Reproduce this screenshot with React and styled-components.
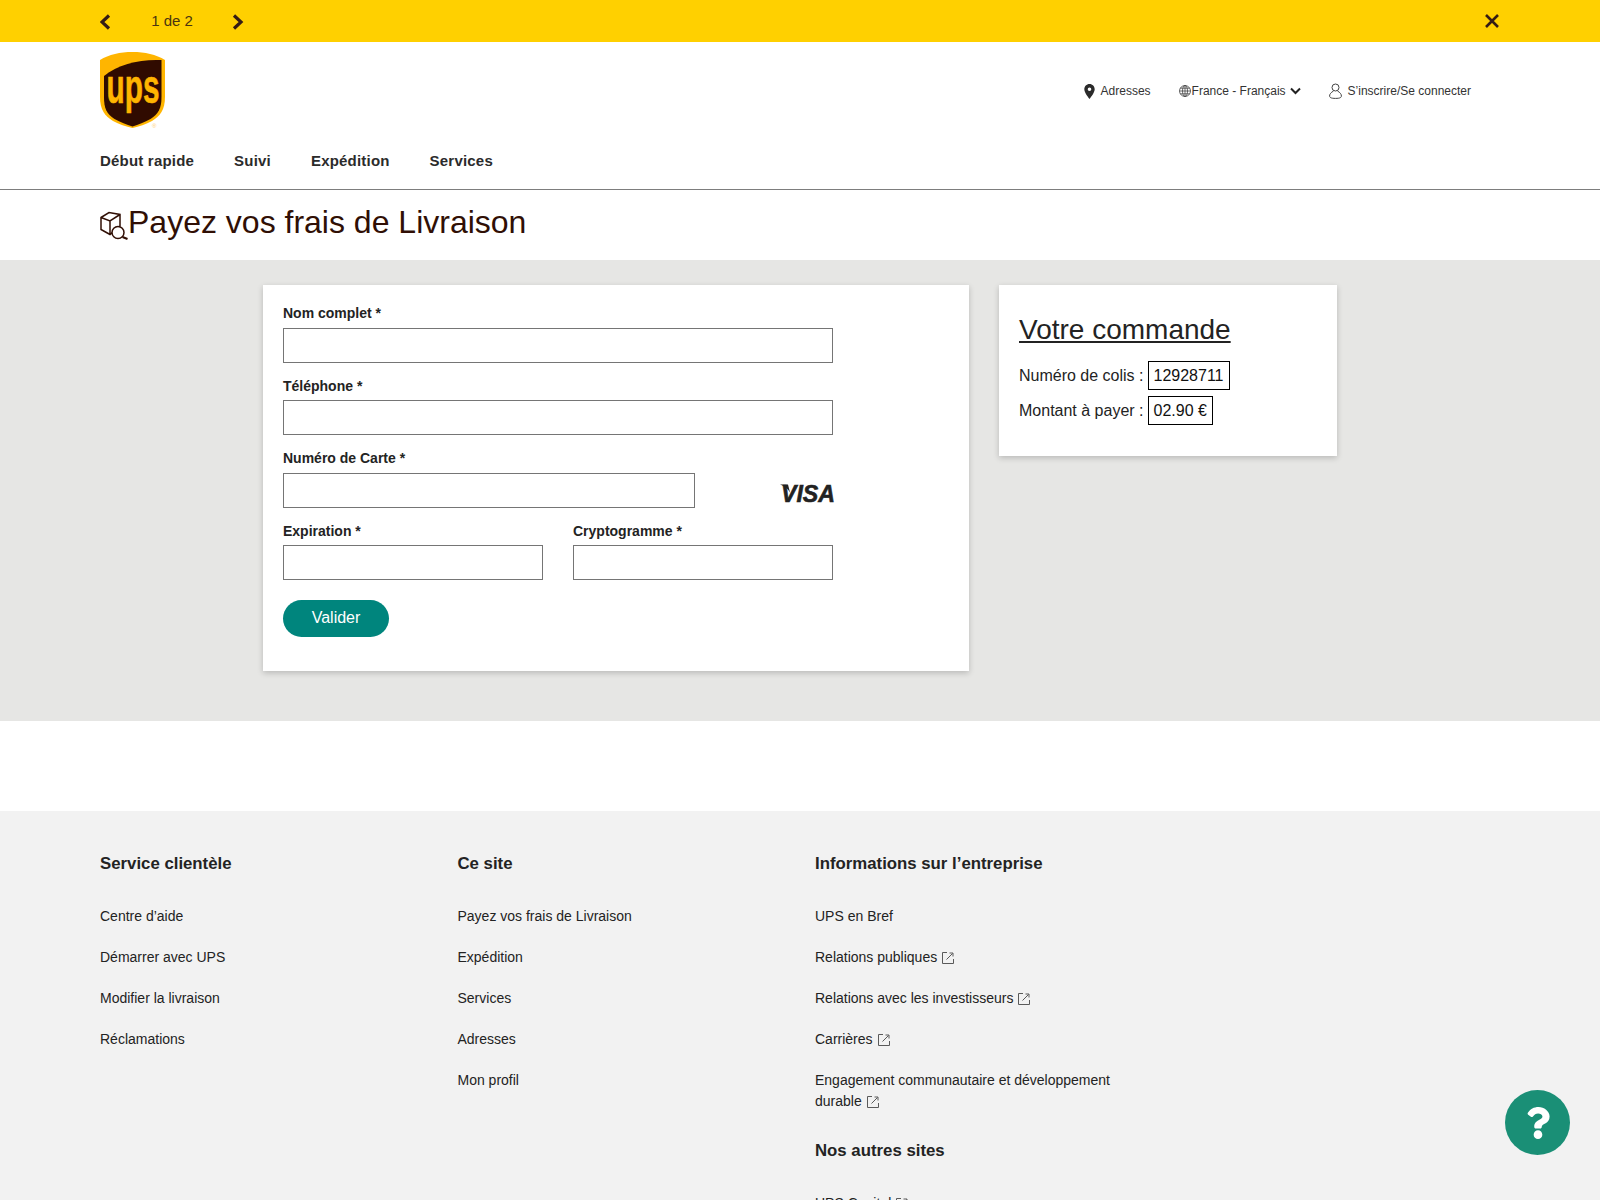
import styled, { createGlobalStyle } from "styled-components";
import { FaQuestion } from "react-icons/fa";

const GlobalStyle = createGlobalStyle`
	html, body {
		margin: 0;
		padding: 0;
		background: #fff;
		font-family: "Liberation Sans", Arial, sans-serif;
		color: #232323;
	}
	* { box-sizing: border-box; }
`

const TopBar = styled.div`
	height: 42px;
	background: #ffd000;
	display: flex;
	align-items: center;
	padding: 0 100px;
	color: #351c15;
`
const Pager = styled.span`
	font-size: 15px;
	width: 120px;
	text-align: center;
	color: #4a3410;
	margin-top: -1px;
`
const BarIcon = styled.svg`
	width: 12px;
	height: 18px;
	fill: none;
	stroke: #351c15;
	stroke-width: 3.2;
	flex: none;
`
const CloseIcon = styled(BarIcon)`
	margin-left: auto;
	margin-right: 1px;
	width: 14px;
	height: 14px;
	stroke-width: 2.6;
`

const Header = styled.header`
	height: 148px;
	border-bottom: 1px solid #7d7d7d;
	padding: 10px 100px 0;
`
const HeaderTop = styled.div`
	display: flex;
	align-items: center;
	justify-content: space-between;
	height: 76px;
`
const Utility = styled.div`
	display: flex;
	align-items: center;
	gap: 28px;
	padding: 2px 29px 0 0;
	font-size: 12px;
	color: #333;
`
const UtilityItem = styled.span`
	display: flex;
	align-items: center;
	gap: ${props => props.$gap || 6}px;
`
const Nav = styled.nav`
	display: flex;
	gap: 40px;
	margin-top: 24px;
	font-size: 15px;
	font-weight: 700;
	color: #2b2b2b;
	letter-spacing: 0.2px;
`

const TitleRow = styled.div`
	height: 70px;
	padding-left: 100px;
	display: flex;
	align-items: center;
`
const PageTitle = styled.h1`
	margin: -5px 0 0;
	font-size: 32px;
	font-weight: 400;
	color: #300f05;
`

const Band = styled.main`
	background: #e6e6e4;
	padding: 25px 263px 50px;
	display: flex;
	align-items: flex-start;
	gap: 30px;
`
const Card = styled.section`
	background: #fff;
	box-shadow: 0 2px 6px rgba(0, 0, 0, 0.2);
`
const FormCard = styled(Card)`
	width: 706px;
	height: 386px;
	padding: 20px;
`
const Field = styled.div`
	display: flex;
	flex-direction: column;
	width: ${props => props.$width || 550}px;
`
const Label = styled.label`
	font-size: 14px;
	font-weight: 700;
	line-height: 16px;
	margin-bottom: ${props => props.$gap || 6}px;
	color: #232323;
`
const Input = styled.input`
	height: 35px;
	border: 1px solid #757575;
	border-radius: 0;
	background: #fff;
	outline: none;
	padding: 0 6px;
	width: 100%;
`
const FieldRow = styled.div`
	display: flex;
	align-items: flex-end;
	gap: 30px;
	width: 550px;
	margin-top: 15px;
`
const Visa = styled.svg`
	width: 56px;
	height: 24px;
	margin-left: auto;
	margin-right: -3px;
	margin-bottom: 3px;
	flex: none;
	overflow: visible;
`
const Submit = styled.button`
	display: block;
	margin-top: 20px;
	width: 106px;
	height: 37px;
	border: 0;
	border-radius: 19px;
	background: #00857d;
	color: #fff;
	font-family: inherit;
	font-size: 16px;
	padding: 0 0 2px;
`
const OrderCard = styled(Card)`
	width: 338px;
	height: 171px;
	padding: 29px 20px 0;
`
const OrderTitle = styled.h2`
	margin: 0 0 15px;
	font-size: 28px;
	line-height: 32px;
	font-weight: 400;
	text-decoration: underline;
	color: #232323;
`
const OrderLine = styled.div`
	display: flex;
	align-items: center;
	gap: 4px;
	font-size: 16px;
	margin-bottom: 6px;
	color: #232323;
`
const OrderValue = styled.span`
	border: 1px solid #000;
	padding: 0 5px;
	line-height: 27px;
	height: 29px;
	color: #111;
`

const Footer = styled.footer`
	margin-top: 90px;
	background: #f2f2f2;
	padding: 43px 100px 40px;
	display: grid;
	grid-template-columns: 357.5px 357.5px 300px;
	align-items: start;
`
const FooterHead = styled.h3`
	margin: ${props => props.$top || 0}px 0 32px;
	font-size: 16.8px;
	line-height: 20px;
	font-weight: 700;
	color: #232323;
`
const FooterList = styled.ul`
	list-style: none;
	margin: 0;
	padding: 0;
	display: flex;
	flex-direction: column;
	gap: 20px;
	font-size: 14px;
	line-height: 21px;
	color: #232323;
`
const ExtIcon = styled.svg`
	display: inline-block;
	width: 12px;
	height: 12px;
	margin-left: 5px;
	vertical-align: -2px;
	fill: none;
	stroke: #5a5a5a;
	stroke-width: 1;
`
const HelpBubble = styled.div`
	position: fixed;
	left: 1505px;
	top: 1090px;
	width: 65px;
	height: 65px;
	border-radius: 50%;
	background: #1a8f76;
	color: #fff;
	display: flex;
	align-items: center;
	justify-content: center;
`

function Ext() {
	return (
		<ExtIcon viewBox="0 0 12 12">
			<path d="M5 .5H.5v11h11V7" />
			<path d="M4.500 7.500L10.500 1.500M7.500 1h3.500v3.500" />
		</ExtIcon>
	);
}

function Logo() {
	return (
		<svg width="65" height="76" viewBox="0 0 65 76" style={{ overflow: "visible" }}>
			<path d="M32.500 0C20 0 9 2.500 0 8v37c0 13 5 19 13 24 6 3.500 13 5.500 19.500 7 6.500-1.500 13.500-3.500 19.500-7 8-5 13-11 13-24V8C56 2.500 45 0 32.500 0z" fill="#ffb500" />
			<path d="M4 24C18 12 40 7 61.500 8V45c0 11-3 17-11 22-6 3.500-12 5.500-18 7.500-6-2-12-4-18-7.500C6.500 62 4 56 4 45z" fill="#300b00" />
			<text x="6.500" y="51" textLength="53" lengthAdjust="spacingAndGlyphs" fontFamily="Liberation Sans" fontWeight="700" fontSize="49" fill="#ffb500" stroke="#ffb500" strokeWidth=".6">ups</text>
			<text x="52" y="76" fontFamily="Liberation Sans" fontSize="6" fill="#ffcf70">®</text>
		</svg>
	);
}

function BoxSearch() {
	return (
		<svg width="28" height="27" viewBox="0 0 28 27" fill="none" stroke="#300f05" strokeWidth="1.500" style={{ flex: "none", overflow: "visible" }}>
			<path d="M1 5.500L9 .5l11 2V14L10 22.500 1 17.500zM1 5.500l9 3.500 10-6.500M10 9v13.500" />
			<circle cx="18" cy="20.500" r="6" fill="#fff" />
			<path d="M22.500 25l5 2" strokeWidth="2" />
		</svg>
	);
}

const leftLinks = ["Centre d’aide", "Démarrer avec UPS", "Modifier la livraison", "Réclamations"];
const midLinks = ["Payez vos frais de Livraison", "Expédition", "Services", "Adresses", "Mon profil"];

function App() {
	return (
		<>
			<GlobalStyle />
			<TopBar>
				<BarIcon viewBox="0 0 12 18"><path d="M9 3.500L2 10l7 6.500" /></BarIcon>
				<Pager>1 de 2</Pager>
				<BarIcon viewBox="0 0 12 18"><path d="M2 3.500L9 10l-7 6.500" /></BarIcon>
				<CloseIcon viewBox="0 0 14 14"><path d="M1 1l12 12M13 1L1 13" /></CloseIcon>
			</TopBar>
			<Header>
				<HeaderTop>
					<Logo />
					<Utility>
						<UtilityItem>
							<svg width="11" height="15" viewBox="0 0 11 15">
								<path fillRule="evenodd" fill="#2b2b2b" d="M5.500 0C2.500 0 .3 2.300.3 5.200c0 3.500 5.200 9.800 5.200 9.800s5.200-6.300 5.200-9.800C10.700 2.300 8.500 0 5.500 0zm0 3.500a1.800 1.800 0 110 3.600 1.800 1.800 0 010-3.600z" />
							</svg>
							Adresses
						</UtilityItem>
						<UtilityItem $gap={1}>
							<svg width="12" height="12" viewBox="0 0 12 12" fill="none" stroke="#444" strokeWidth=".8">
								<circle cx="6" cy="6" r="5.500" />
								<ellipse cx="6" cy="6" rx="2.500" ry="5.500" />
								<path d="M.5 6h11M1.200 3.200h9.600M1.200 8.800h9.600M6 .5v11" />
							</svg>
							France - Français
							<svg width="11" height="8" viewBox="0 0 11 8" fill="none" stroke="#222" strokeWidth="2" style={{ marginLeft: 3 }}>
								<path d="M1 1.500l4.500 4.500L10 1.500" />
							</svg>
						</UtilityItem>
						<UtilityItem>
							<svg width="13" height="16" viewBox="0 0 13 16" fill="none" stroke="#444" strokeWidth="1">
								<circle cx="6.500" cy="4.500" r="3.500" />
								<path d="M4.500 8C2 9.500.6 11 .6 13c0 1.500 1.400 2.400 5.900 2.400s5.900-.9 5.900-2.400c0-2-1.400-3.500-3.900-5" />
							</svg>
							S’inscrire/Se connecter
						</UtilityItem>
					</Utility>
				</HeaderTop>
				<Nav>
					<span>Début rapide</span>
					<span>Suivi</span>
					<span>Expédition</span>
					<span>Services</span>
				</Nav>
			</Header>
			<TitleRow>
				<BoxSearch />
				<PageTitle>Payez vos frais de Livraison</PageTitle>
			</TitleRow>
			<Band>
				<FormCard>
					<Field>
						<Label $gap={7}>Nom complet *</Label>
						<Input />
					</Field>
					<FieldRow>
						<Field>
							<Label>Téléphone *</Label>
							<Input />
						</Field>
					</FieldRow>
					<FieldRow>
						<Field $width={412}>
							<Label $gap={7}>Numéro de Carte *</Label>
							<Input />
						</Field>
						<Visa viewBox="0 0 56 24">
							<path d="M0 3.500h8l2 8C8 7.500 4 5 0 3.500z" fill="#222" />
							<text x="1" y="20.500" textLength="54" lengthAdjust="spacingAndGlyphs" fontFamily="Liberation Sans" fontStyle="italic" fontWeight="700" fontSize="24" fill="#222" stroke="#222" strokeWidth=".6">VISA</text>
						</Visa>
					</FieldRow>
					<FieldRow>
						<Field $width={260}>
							<Label>Expiration *</Label>
							<Input />
						</Field>
						<Field $width={260}>
							<Label>Cryptogramme *</Label>
							<Input />
						</Field>
					</FieldRow>
					<Submit>Valider</Submit>
				</FormCard>
				<OrderCard>
					<OrderTitle>Votre commande</OrderTitle>
					<OrderLine>Numéro de colis : <OrderValue>12928711</OrderValue></OrderLine>
					<OrderLine>Montant à payer : <OrderValue>02.90 €</OrderValue></OrderLine>
				</OrderCard>
			</Band>
			<Footer>
				<div>
					<FooterHead>Service clientèle</FooterHead>
					<FooterList>
						{leftLinks.map(l => <li key={l}>{l}</li>)}
					</FooterList>
				</div>
				<div>
					<FooterHead>Ce site</FooterHead>
					<FooterList>
						{midLinks.map(l => <li key={l}>{l}</li>)}
					</FooterList>
				</div>
				<div>
					<FooterHead>Informations sur l’entreprise</FooterHead>
					<FooterList>
						<li>UPS en Bref</li>
						<li>Relations publiques<Ext /></li>
						<li>Relations avec les investisseurs<Ext /></li>
						<li>Carrières<Ext /></li>
						<li>Engagement communautaire et développement durable<Ext /></li>
					</FooterList>
					<FooterHead $top={29}>Nos autres sites</FooterHead>
					<FooterList>
						<li>UPS Capital<Ext /></li>
					</FooterList>
				</div>
			</Footer>
			<HelpBubble><FaQuestion size={32} /></HelpBubble>
		</>
	);
}

export default App;
